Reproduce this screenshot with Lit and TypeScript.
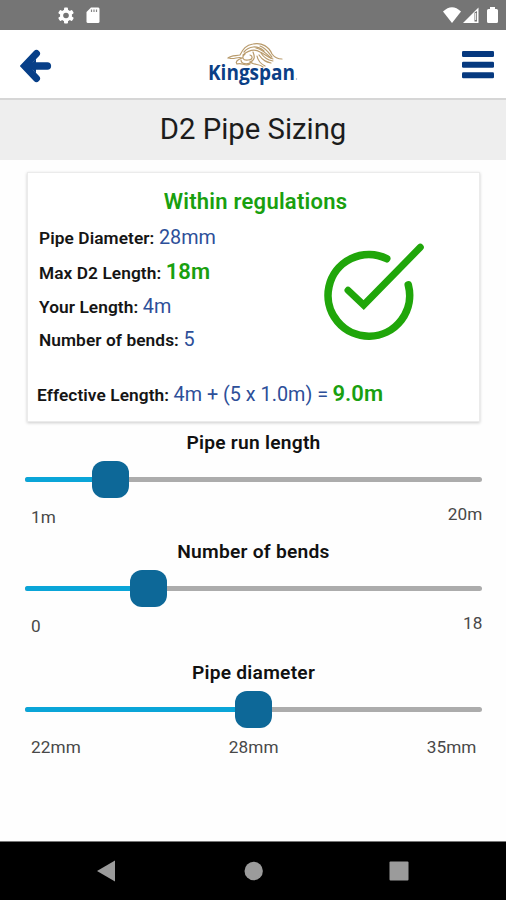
import { LitElement, html, css, svg } from "lit";
import { customElement, property } from "lit/decorators.js";
import { styleMap } from "lit/directives/style-map.js";

@customElement("range-slider")
class RangeSlider extends LitElement {
  @property() heading = "";
  @property({ type: Number }) position = 0;
  @property({ type: Array }) marks: string[] = [];
  @property({ type: Boolean, reflect: true }) inset = false;

  static styles = css`
    :host { display: block; }
    .heading { font-size: 19.2px; font-weight: 600; line-height: 26px; text-align: center; color: #111; letter-spacing: 0.25px; padding-left: 1px; }
    .rail { position: relative; height: 37px; margin: 5px 24px 0 25px; display: flex; align-items: center; }
    .track { width: 100%; height: 5px; border-radius: 3px; background: #acacac; overflow: hidden; }
    .fill { height: 100%; background: #0aa5d8; }
    .thumb { position: absolute; top: 0; width: 37px; height: 37px; margin-left: -18.5px; border-radius: 12px; background: #0d6898; }
    .marks { display: flex; justify-content: space-between; margin: 3px 23.5px 3px 31px; font-size: 17.2px; line-height: 26px; color: #484848; letter-spacing: 0.1px; }
    .first { padding-top: 3px; }
    :host([inset]) .marks { margin-right: 29.5px; margin-top: 6px; }
    :host([inset]) .first { padding-top: 0; }
  `;

  render() {
    return html`
      <div class="heading">${this.heading}</div>
      <div class="rail">
        <div class="track"><div class="fill" style=${styleMap({ width: `${this.position}%` })}></div></div>
        <div class="thumb" style=${styleMap({ left: `${this.position}%` })}></div>
      </div>
      <div class="marks">${this.marks.map((m, i) => html`<span class=${i === 0 ? "first" : "mark"}>${m}</span>`)}</div>
    `;
  }
}

const gearTeeth = [0, 60, 120].map(
  (a) => svg`<rect x="6" y="0" width="4" height="16" rx="1" transform="rotate(${a} 8 8)"/>`
);

@customElement("app-root")
class AppRoot extends LitElement {
  static styles = css`
    :host { display: flex; flex-direction: column; width: 506px; height: 900px; overflow: hidden; background: #fefefe; font-family: Roboto, "Liberation Sans", sans-serif; }
    svg { display: block; }
    .status { height: 30px; box-sizing: border-box; padding: 7px 8px 0 58px; background: #757575; display: flex; align-items: flex-start; }
    .sd { margin-left: 12px; }
    .wifi { margin-left: auto; }
    .signal { margin-left: 2px; }
    .battery { margin-left: 8px; }
    .header { height: 70px; box-sizing: border-box; background: #fff; border-bottom: 2px solid #d6d6d6; display: grid; grid-template-columns: 60px 1fr 60px; }
    .back { padding: 19px 0 0 20px; }
    .menu { padding: 21px 0 0 16px; }
    .logo { justify-self: center; padding-top: 10px; }
    .logo svg { overflow: visible; }
    .wordmark { font: 700 21.5px "Open Sans", sans-serif; fill: #0b3f86; }
    .title { height: 60px; box-sizing: border-box; padding-bottom: 2px; background: #eeeeee; color: #1c1c1c; font-size: 29.3px; line-height: 58px; text-align: center; }
    .card { position: relative; box-sizing: border-box; width: 453px; height: 250px; margin: 12px 0 0 27px; padding: 15px 9px 0 11px; background: #fff; border: 1px solid #ebebeb; box-shadow: 0 1px 3px rgba(0, 0, 0, 0.2); }
    .verdict { text-align: center; font-size: 22px; line-height: 28px; font-weight: 600; color: #19a00f; letter-spacing: 0.25px; padding-left: 2px; }
    .row { display: flex; align-items: baseline; gap: 4.5px; line-height: 30px; height: 30px; white-space: nowrap; }
    .diameter { margin-top: 7px; }
    .max { margin-top: 4px; }
    .own { margin-top: 5px; }
    .bends { margin-top: 3px; }
    .effective { margin: 24px 0 0 -2px; }
    .label { font-size: 17.3px; font-weight: 600; color: #151515; letter-spacing: 0.08px; }
    .value { font-size: 19.8px; color: #2d4f99; }
    .good { font-size: 22px; font-weight: 600; color: #19a00f; }
    .tick { position: absolute; left: 292px; top: 66px; }
    .first-slider { margin-top: 8px; }
    .second-slider { margin-top: 6px; }
    .third-slider { margin-top: 18px; }
    .nav { margin-top: auto; height: 59px; box-sizing: border-box; border-top: 1px solid #777; background: #000; display: grid; grid-template-columns: 97px 147px 145px 1fr; align-items: start; padding-top: 18px; }
  `;

  render() {
    return html`
      <div class="status">
        <svg width="16" height="17" viewBox="0 0 16 16" fill="#fff"><circle cx="8" cy="8" r="6"/>${gearTeeth}<circle cx="8" cy="8" r="2.8" fill="#757575"/></svg>
        <svg class="sd" width="14" height="17" viewBox="0 0 14 17"><path d="M5 .5H12.3Q13.5.5 13.5 2V14.5Q13.5 16 12 16H2Q.5 16 .5 14.5V5Z" fill="#fff"/><path d="M5.5 2.5V5M8 2.5V5M10.5 2.5V5" stroke="#858585" stroke-width="1.2"/></svg>
        <svg class="wifi" width="18" height="17" viewBox="0 0 18 17"><path d="M0 4.5Q9-4 18 4.5L9 16Z" fill="#fff"/></svg>
        <svg class="signal" width="16" height="17" viewBox="0 0 16 17"><path d="M0 16L15.5.5V16Z" fill="#fff"/><path d="M11.5 5.5V14.5H14V4" fill="#757575"/><path d="M12.7 6V13" stroke="#fff"/></svg>
        <svg class="battery" width="11" height="17" viewBox="0 0 11 17"><path d="M3 0H8V2H9.5Q11 2 11 3.5V14.5Q11 16 9.5 16H1.5Q0 16 0 14.5V3.5Q0 2 1.5 2H3Z" fill="#fff"/></svg>
      </div>
      <div class="header">
        <div class="back"><svg width="32" height="34" viewBox="0 0 32 34" fill="none" stroke="#073f88" stroke-linecap="round"><path d="M16.5 4.5L4.5 17L16.5 29.5" stroke-width="7" stroke-linejoin="miter"/><path d="M6 17H27.3" stroke-width="7.6"/><path d="M10 17L16 9.5V24.5Z" fill="#073f88" stroke="none"/></svg></div>
        <div class="logo">
          <svg width="114" height="56" viewBox="-11 0 114 56">
            <g fill="none" stroke="#b99b6c" stroke-linecap="round" stroke-width="1.2">
              <path d="M21 18C24 15 29 16 33 15C36 9 39 5 46 4C55 2 62 7 65 14C68 18 73 19 75 19"/>
              <path d="M22 18C27 20 31 16 35 18C30 20 28 22 30 24C35 22 38 27 43 24"/>
              <path d="M37 12C42 6 50 5 57 11M36 15C42 10 48 9 53 12C58 14 61 18 66 19"/>
              <path d="M53 6C59 8 62 13 65 17M49 8C55 9 60 14 64 18M54 13C57 18 61 20 66 21M52 15C56 21 60 22 64 23"/>
              <path d="M38 14C34 17 36 21 41 20C46 20 46 16 43 15M46 12C48 17 48 20 43 22C48 26 52 23 56 27"/>
              <path d="M50 16C51 21 54 24 58 26M34 20C34 24 40 25 45 22"/>
            </g>
            <text class="wordmark" x="1" y="40" textLength="87" lengthAdjust="spacingAndGlyphs">Kingspan</text>
            <circle cx="89.5" cy="39" r=".7" fill="#8ba0c0"/>
          </svg>
        </div>
        <div class="menu"><svg width="32" height="28" viewBox="0 0 32 28" fill="#06397f"><rect width="32" height="6" rx="1.3"/><rect y="10.7" width="32" height="6" rx="1.3"/><rect y="21.3" width="32" height="6" rx="1.3"/></svg></div>
      </div>
      <div class="title">D2 Pipe Sizing</div>
      <div class="card">
        <div class="verdict">Within regulations</div>
        <div class="row diameter"><span class="label">Pipe Diameter:</span><span class="value">28mm</span></div>
        <div class="row max"><span class="label">Max D2 Length:</span><span class="good">18m</span></div>
        <div class="row own"><span class="label">Your Length:</span><span class="value">4m</span></div>
        <div class="row bends"><span class="label">Number of bends:</span><span class="value">5</span></div>
        <div class="row effective"><span class="label">Effective Length:</span><span class="value">4m + (5 x 1.0m) =</span><span class="good">9.0m</span></div>
        <svg class="tick" width="110" height="106" viewBox="320 239 110 106" fill="none" stroke="#20a60a" stroke-width="7.6" stroke-linecap="round"><path d="M386.7 258.7A40.8 40.8 0 1 0 408.3 285"/><path d="M348 290.3L363.7 305L420.3 247.3" stroke-width="7"/></svg>
      </div>
      <range-slider class="first-slider" heading="Pipe run length" .position=${18.6} .marks=${["1m", "20m"]}></range-slider>
      <range-slider class="second-slider" heading="Number of bends" .position=${27} .marks=${["0", "18"]}></range-slider>
      <range-slider class="third-slider" inset heading="Pipe diameter" .position=${50} .marks=${["22mm", "28mm", "35mm"]}></range-slider>
      <div class="nav">
        <span></span>
        <svg width="18" height="22" viewBox="0 0 18 22"><path d="M0 11L18 .5V21.5Z" fill="#9b9b9b"/></svg>
        <svg width="20" height="22" viewBox="0 0 20 22"><circle cx="9.7" cy="11" r="9.2" fill="#9b9b9b"/></svg>
        <svg width="20" height="22" viewBox="0 0 20 22"><rect x=".5" y="1.5" width="19" height="19" rx="1" fill="#9b9b9b"/></svg>
      </div>
    `;
  }
}
